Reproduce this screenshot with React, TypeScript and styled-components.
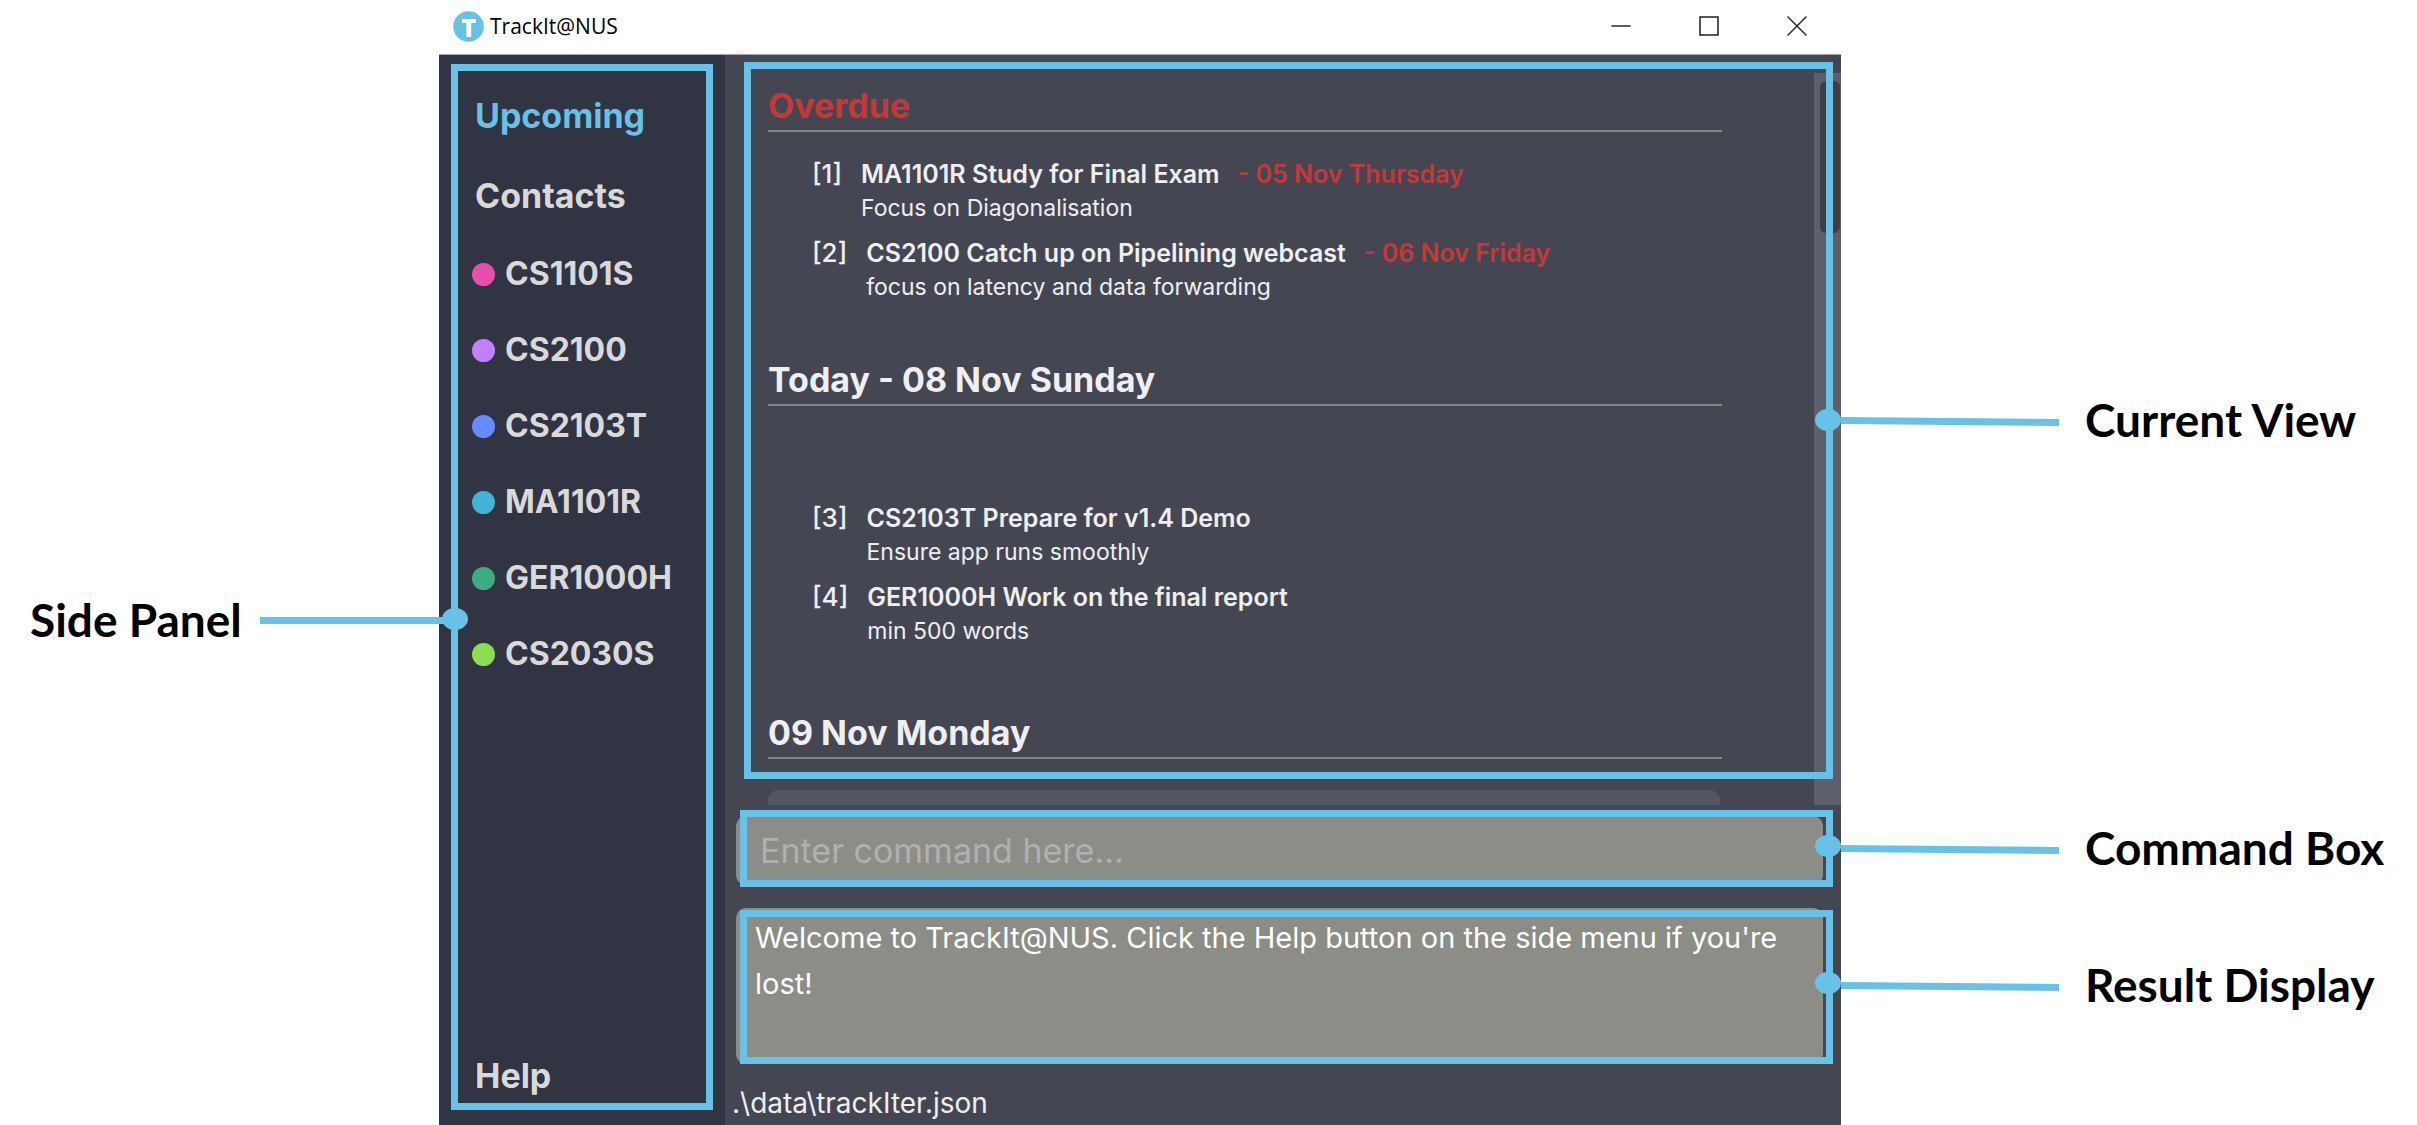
import React from "react";
import styled, { createGlobalStyle } from "styled-components";

const color = {
  accent: "#68c1e7",
  sidebar: "#313442",
  main: "#444752",
  field: "#8c8d87",
  card: "#515564",
  track: "#5d5f6c",
  thumb: "#3e3e44",
  text: "#efeff2",
  muted: "#d9d9d9",
  danger: "#c83737",
};

const uiFont = `Inter, "Noto Sans", sans-serif`;

const GlobalStyle = createGlobalStyle`
  *, *::before, *::after { box-sizing: border-box; }
  body { margin: 0; background: #fff; font-family: ${uiFont}; }
  button, input { font: inherit; color: inherit; }
  ul { list-style: none; margin: 0; padding: 0; }
  h2, h3, p { margin: 0; }
`;

const Page = styled.div`
  display: grid;
  grid-template-columns: minmax(0, 439fr) minmax(0, 1402fr) minmax(0, 576fr);
  height: 100vh;
  min-height: 1000px;
  overflow: hidden;
`;

/* ---------- annotations ---------- */

const Callouts = styled.aside<{ $top: number }>`
  display: flex;
  flex-direction: column;
  padding-top: ${(p) => p.$top}px;
  position: relative;
  z-index: 1;
`;

const Callout = styled.div<{ $before?: number }>`
  display: flex;
  align-items: center;
  height: 60px;
  margin-top: ${(p) => p.$before ?? 0}px;
`;

const CalloutLabel = styled.span`
  font-family: Lato, "Open Sans", sans-serif;
  font-weight: 700;
  font-size: 46px;
  line-height: 60px;
  white-space: nowrap;
  color: #000;
`;

const LeftLabel = styled(CalloutLabel)`
  padding: 0 18px 0 30px;
`;

const LeftLine = styled.div`
  flex: 1;
  height: 7px;
  margin-right: -6px;
  background: ${color.accent};
`;

const RightLine = styled.svg`
  flex: 0 0 218px;
  height: 12px;
  margin-right: 26px;
`;

const Frame = styled.div<{ $inset: string }>`
  position: absolute;
  inset: ${(p) => p.$inset};
  border: 7px solid ${color.accent};
  pointer-events: none;
  z-index: 2;
`;

const Anchor = styled.i<{ $side: "left" | "right"; $top: number }>`
  position: absolute;
  top: ${(p) => p.$top}px;
  ${(p) => (p.$side === "left" ? "left: -16px;" : "right: -15px;")}
  width: 26px;
  height: 22px;
  border-radius: 50%;
  background: ${color.accent};
`;

/* ---------- window ---------- */

const Window = styled.main`
  display: flex;
  flex-direction: column;
  min-height: 0;
`;

const TitleBar = styled.header`
  display: flex;
  align-items: center;
  height: 55px;
  padding: 0 0 2px 14px;
  border-bottom: 1px solid #a5a6ab;
  background: #fff;
`;

const Title = styled.span`
  flex: 1;
  margin-left: 6px;
  font-family: "Open Sans", "Noto Sans", sans-serif;
  font-size: 21px;
  line-height: 32px;
  color: #000;
`;

const WindowButton = styled.button`
  display: grid;
  place-items: center;
  width: 88px;
  height: 52px;
  padding: 0;
  border: 0;
  background: none;
`;

const Body = styled.div`
  flex: 1;
  display: grid;
  grid-template-columns: 286px minmax(0, 1fr);
  min-height: 0;
`;

const Sidebar = styled.nav`
  position: relative;
  display: flex;
  flex-direction: column;
  padding: 21px 20px 9px 33px;
  background: ${color.sidebar};
`;

const NavButton = styled.button<{ $active?: boolean; $compact?: boolean }>`
  display: flex;
  align-items: center;
  gap: 10px;
  width: 100%;
  height: ${(p) => (p.$compact ? 76 : 80)}px;
  padding: 0 0 0 ${(p) => (p.$compact ? 0 : 3)}px;
  border: 0;
  background: none;
  font-weight: 700;
  font-size: ${(p) => (p.$compact ? 32 : 34)}px;
  line-height: 48px;
  text-align: left;
  white-space: nowrap;
  color: ${(p) => (p.$active ? color.accent : color.muted)};
`;

const Dot = styled.span<{ $color: string }>`
  flex: none;
  width: 23px;
  height: 23px;
  border-radius: 50%;
  background: ${(p) => p.$color};
`;

const Spacer = styled.div`
  flex: 1;
`;

const Content = styled.section`
  display: flex;
  flex-direction: column;
  min-height: 0;
  background: ${color.main};
`;

const View = styled.div`
  position: relative;
  flex: 1;
  display: flex;
  min-height: 0;
`;

const Agenda = styled.div`
  flex: 1;
  min-width: 0;
  padding: 25px 92px 0 43px;
  overflow: hidden;
`;

const Track = styled.div`
  flex: none;
  width: 27px;
  margin-top: 18px;
  padding: 8px 1px 0 6px;
  background: ${color.track};
`;

const Thumb = styled.div`
  height: 152px;
  border-radius: 6px;
  background: ${color.thumb};
`;

const Day = styled.section<{ $lessons?: boolean }>`
  padding-bottom: ${(p) => (p.$lessons ? 59 : 50)}px;
`;

const DayTitle = styled.h2<{ $late?: boolean }>`
  padding-top: 2px;
  border-bottom: 2px solid #85857f;
  font-weight: 700;
  font-size: 34px;
  line-height: 48px;
  color: ${(p) => (p.$late ? color.danger : color.text)};
`;

const Lessons = styled.div`
  height: 70px;
`;

const Tasks = styled.ul`
  display: flex;
  flex-direction: column;
  gap: 11px;
  padding: 25px 0 0 44px;
`;

const Task = styled.li`
  display: flex;
  gap: 19px;
  font-size: 26px;
  line-height: 34px;
  color: ${color.text};
`;

const TaskIndex = styled.span`
  font-weight: 500;
`;

const TaskTitle = styled.h3`
  display: flex;
  gap: 18px;
  font-weight: 600;
  font-size: 25px;
  line-height: 34px;
  white-space: nowrap;
`;

const Due = styled.span`
  color: ${color.danger};
`;

const TaskNote = styled.p`
  font-size: 23px;
  line-height: 34px;
`;

const LessonCard = styled.div`
  height: 120px;
  margin: 31px 2px 0 0;
  border-radius: 10px;
  background: ${color.card};
`;

const Command = styled.form`
  position: relative;
  margin: 11px 18px 0 11px;
`;

const CommandInput = styled.input`
  display: block;
  width: 100%;
  height: 69px;
  padding: 0 24px;
  border: 0;
  border-radius: 10px;
  outline: 0;
  background: ${color.field};
  font-size: 34px;
  font-weight: 400;
  color: #fff;
  &::placeholder {
    color: #b0b0b0;
    opacity: 1;
  }
`;

const Result = styled.div`
  position: relative;
  height: 156px;
  margin: 23px 18px 0 11px;
  padding: 7px 19px;
  border-radius: 10px;
  background: ${color.field};
  font-size: 29px;
  line-height: 46px;
  color: #fff;
`;

const StatusBar = styled.footer`
  height: 61px;
  padding: 16px 7px 0;
  font-size: 28px;
  line-height: 46px;
  color: ${color.text};
`;

/* ---------- data ---------- */

const modules = [
  { code: "CS1101S", tint: "#e84fac" },
  { code: "CS2100", tint: "#c080ff" },
  { code: "CS2103T", tint: "#668aff" },
  { code: "MA1101R", tint: "#42b4d8" },
  { code: "GER1000H", tint: "#3eac82" },
  { code: "CS2030S", tint: "#8edc50" },
];

type TaskData = { id: number; title: string; note: string; due?: string };

const overdue: TaskData[] = [
  { id: 1, title: "MA1101R Study for Final Exam", note: "Focus on Diagonalisation", due: "- 05 Nov Thursday" },
  { id: 2, title: "CS2100 Catch up on Pipelining webcast", note: "focus on latency and data forwarding", due: "- 06 Nov Friday" },
];

const today: TaskData[] = [
  { id: 3, title: "CS2103T Prepare for v1.4 Demo", note: "Ensure app runs smoothly" },
  { id: 4, title: "GER1000H Work on the final report", note: "min 500 words" },
];

function TaskList({ items }: { items: TaskData[] }) {
  return (
    <Tasks>
      {items.map((t) => (
        <Task key={t.id}>
          <TaskIndex>[{t.id}]</TaskIndex>
          <div>
            <TaskTitle>
              <span>{t.title}</span>
              {t.due && <Due>{t.due}</Due>}
            </TaskTitle>
            <TaskNote>{t.note}</TaskNote>
          </div>
        </Task>
      ))}
    </Tasks>
  );
}

function Connector() {
  return (
    <RightLine viewBox="0 0 218 12" preserveAspectRatio="none" aria-hidden="true">
      <path d="M0 3 L218 5 V12 L0 10 Z" fill={color.accent} />
    </RightLine>
  );
}

export default function App() {
  return (
    <Page>
      <GlobalStyle />
      <Callouts $top={590}>
        <Callout>
          <LeftLabel>Side Panel</LeftLabel>
          <LeftLine />
        </Callout>
      </Callouts>

      <Window>
        <TitleBar>
          <svg width="31" height="31" viewBox="0 0 31 31" aria-hidden="true">
            <circle cx="15.5" cy="15.5" r="15.3" fill={color.accent} />
            <path d="M9 8 H23 V12 H18.2 V26 H13.4 V12 H9 Z" fill="#fff" />
          </svg>
          <Title>TrackIt@NUS</Title>
          <WindowButton aria-label="Minimize">
            <svg width="20" height="20" viewBox="0 0 20 20">
              <path d="M0.5 10 H19.5" stroke="#333" strokeWidth="1.6" />
            </svg>
          </WindowButton>
          <WindowButton aria-label="Maximize">
            <svg width="20" height="20" viewBox="0 0 20 20">
              <rect x="1" y="1" width="18" height="18" fill="none" stroke="#111" strokeWidth="1.4" />
            </svg>
          </WindowButton>
          <WindowButton aria-label="Close">
            <svg width="20" height="20" viewBox="0 0 20 20">
              <path d="M0.5 0.5 L19.5 19.5 M19.5 0.5 L0.5 19.5" stroke="#222" strokeWidth="1.4" />
            </svg>
          </WindowButton>
        </TitleBar>

        <Body>
          <Sidebar>
            <NavButton $active>Upcoming</NavButton>
            <NavButton>Contacts</NavButton>
            <ul>
              {modules.map((m) => (
                <li key={m.code}>
                  <NavButton $compact>
                    <Dot $color={m.tint} />
                    {m.code}
                  </NavButton>
                </li>
              ))}
            </ul>
            <Spacer />
            <NavButton>Help</NavButton>
            <Frame $inset="9px 12px 15px 12px">
              <Anchor $side="left" $top={537} />
            </Frame>
          </Sidebar>

          <Content>
            <View>
              <Agenda>
                <Day>
                  <DayTitle $late>Overdue</DayTitle>
                  <TaskList items={overdue} />
                </Day>
                <Day $lessons>
                  <DayTitle>Today - 08 Nov Sunday</DayTitle>
                  <Lessons />
                  <TaskList items={today} />
                </Day>
                <Day $lessons>
                  <DayTitle>09 Nov Monday</DayTitle>
                  <LessonCard />
                </Day>
              </Agenda>
              <Track>
                <Thumb />
              </Track>
              <Frame $inset="7px 8px 26px 19px">
                <Anchor $side="right" $top={340} />
              </Frame>
            </View>
            <Command onSubmit={(e: React.FormEvent) => e.preventDefault()}>
              <CommandInput type="text" aria-label="Command" placeholder="Enter command here..." />
              <Frame $inset="-6px -10px -2px 4px">
                <Anchor $side="right" $top={18} />
              </Frame>
            </Command>
            <Result>
              Welcome to TrackIt@NUS. Click the Help button on the side menu if you're lost!
              <Frame $inset="2px -10px 0 4px">
                <Anchor $side="right" $top={55} />
              </Frame>
            </Result>
            <StatusBar>.\data\trackIter.json</StatusBar>
          </Content>
        </Body>
      </Window>

      <Callouts $top={390}>
        <Callout>
          <Connector />
          <CalloutLabel>Current View</CalloutLabel>
        </Callout>
        <Callout $before={368}>
          <Connector />
          <CalloutLabel>Command Box</CalloutLabel>
        </Callout>
        <Callout $before={77}>
          <Connector />
          <CalloutLabel>Result Display</CalloutLabel>
        </Callout>
      </Callouts>
    </Page>
  );
}
